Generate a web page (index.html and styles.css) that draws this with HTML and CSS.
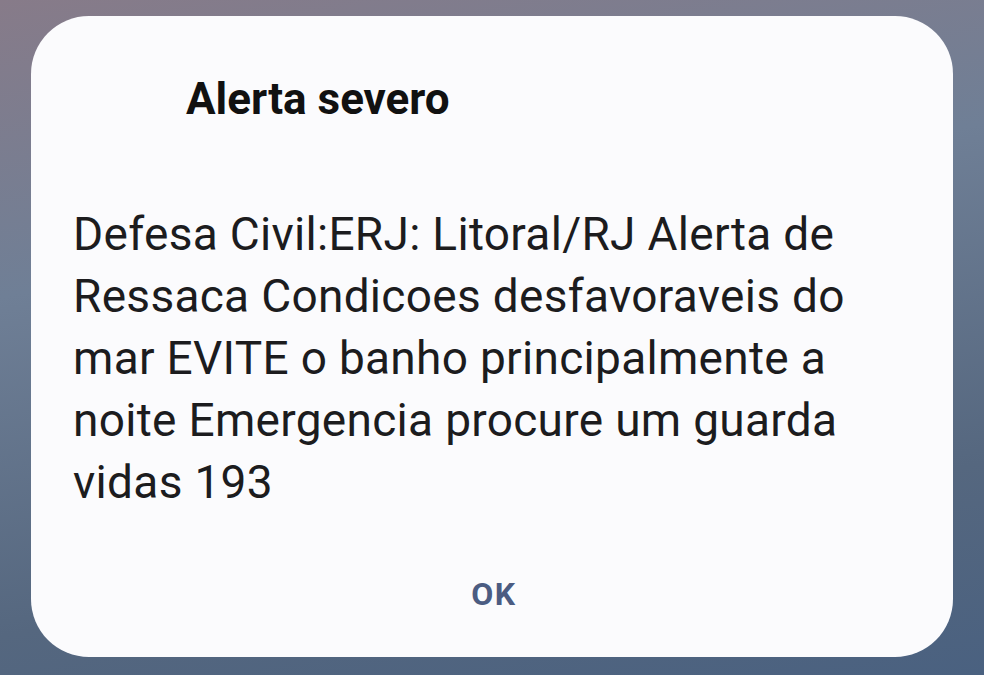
FILE: index.html
```html
<!DOCTYPE html>
<html lang="pt-BR">
<head>
    <meta charset="UTF-8">
    <meta name="viewport" content="width=device-width, initial-scale=1.0">
    <title>Alerta severo</title>
    <link rel="stylesheet" href="styles.css">
</head>
<body>
    <div class="dialog">
        <h1 class="dialog-title">Alerta severo</h1>
        <p class="dialog-message">Defesa Civil:ERJ: Litoral/RJ Alerta de Ressaca Condicoes desfavoraveis do mar EVITE o banho principalmente a noite Emergencia procure um guarda vidas 193</p>
        <div class="dialog-actions">
            <button class="btn-ok">OK</button>
        </div>
    </div>
</body>
</html>
```

FILE: styles.css
```css
body {
    font-family: Roboto, 'Noto Sans', sans-serif;
    margin: 0;
    width: 984px;
    height: 675px;
    overflow: hidden;
    background: linear-gradient(170deg, #877b89 0%, #6f7f96 35%, #55677f 75%, #4a6180 100%);
    padding: 16px 0 0 31px;
    box-sizing: border-box;
}

.dialog {
    background: #fbfbfd;
    border-radius: 58px;
    width: 922px;
    height: 641px;
    box-sizing: border-box;
    padding: 0 40px 0 42px;
    display: flex;
    flex-direction: column;
}

.dialog-title {
    font-size: 44px;
    font-weight: 700;
    color: #111;
    margin: 0;
    padding: 57px 0 0 113px;
    line-height: 52px;
}

.dialog-message {
    font-size: 46px;
    line-height: 62px;
    letter-spacing: 0.3px;
    color: #1c1c1e;
    margin: 78px 0 0 0;
}

.dialog-actions {
    margin-top: auto;
    display: flex;
    justify-content: center;
    padding-bottom: 34px;
}

.btn-ok {
    background: none;
    border: none;
    font-family: inherit;
    font-size: 32px;
    font-weight: 700;
    letter-spacing: 1.5px;
    color: #4b5c82;
    padding: 10px 24px 10px 26px;
    cursor: pointer;
}
```
